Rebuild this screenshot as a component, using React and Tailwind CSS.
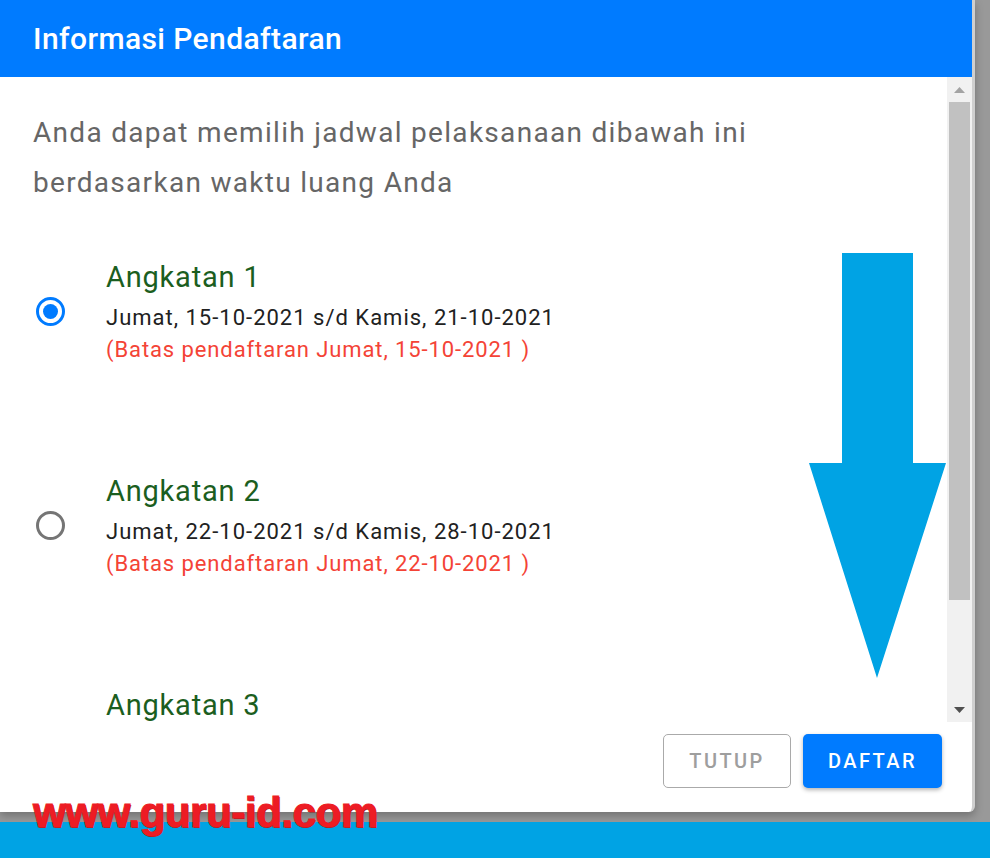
import React from "react";

function Radio({ checked }) {
  return checked ? (
    <div className="w-[29px] h-[29px] rounded-full border-[3px] border-[#007bff] flex items-center justify-center shrink-0">
      <div className="w-[15px] h-[15px] rounded-full bg-[#007bff]" />
    </div>
  ) : (
    <div className="w-[29px] h-[29px] rounded-full border-[3px] border-[#757575] shrink-0" />
  );
}

function Item({ n, range, deadline, checked }) {
  return (
    <div className="flex items-center pl-[36px] h-[109px]">
      <Radio checked={checked} />
      <div className="ml-[41px] flex flex-col">
        <div className="h-[40px] leading-[40px] text-[29px] tracking-[0.8px] text-[#1b5e20]">Angkatan {n}</div>
        <div className="mt-[5px] h-[32px] leading-[32px] text-[22px] tracking-[1px] text-[#212121]">{range}</div>
        <div className="h-[32px] leading-[32px] text-[22px] tracking-[0.9px] text-[#f44336]">{deadline}</div>
      </div>
    </div>
  );
}

export default function App() {
  return (
    <div className="relative w-[990px] h-[858px] overflow-hidden bg-[#999999] flex flex-col font-['Roboto','Liberation_Sans',sans-serif]">
      <div className="w-[975px] h-[812px] bg-white rounded-br-[6px] flex flex-col border-r-[3px] border-[#cfcfcf] shadow-[0_4px_8px_rgba(0,0,0,0.25)] shrink-0">
        <div className="h-[77px] bg-[#007bff] flex items-center px-[33px] shrink-0">
          <span className="text-white text-[30px] font-medium tracking-[0.4px]">Informasi Pendaftaran</span>
        </div>
        <div className="h-[645px] flex shrink-0">
          <div className="flex-1 overflow-hidden">
            <div className="pt-[31px] pl-[33px] pr-[40px] text-[28px] tracking-[1.3px] leading-[50px] text-[#666666] whitespace-nowrap">
              Anda dapat memilih jadwal pelaksanaan dibawah ini
              <br />
              berdasarkan waktu luang Anda
            </div>
            <div className="mt-[49px] flex flex-col gap-[105px]">
              <Item n={1} checked range="Jumat, 15-10-2021 s/d Kamis, 21-10-2021" deadline="(Batas pendaftaran Jumat, 15-10-2021 )" />
              <Item n={2} range="Jumat, 22-10-2021 s/d Kamis, 28-10-2021" deadline="(Batas pendaftaran Jumat, 22-10-2021 )" />
              <div className="flex items-start pl-[36px]">
                <div className="w-[29px] shrink-0" />
                <div className="ml-[41px] h-[40px] leading-[40px] text-[29px] tracking-[0.8px] text-[#1b5e20]">Angkatan 3</div>
              </div>
            </div>
          </div>
          <div className="w-[25px] bg-[#f1f1f1] flex flex-col shrink-0">
            <div className="h-[25px] flex items-center justify-center shrink-0">
              <svg width="11" height="6" viewBox="0 0 11 6"><polygon points="0,6 11,6 5.5,0" fill="#a3a3a3" /></svg>
            </div>
            <div className="h-[498px] mx-[2px] bg-[#c1c1c1] shrink-0" />
            <div className="flex-1" />
            <div className="h-[25px] flex items-center justify-center shrink-0">
              <svg width="11" height="6" viewBox="0 0 11 6"><polygon points="0,0 11,0 5.5,6" fill="#505050" /></svg>
            </div>
          </div>
        </div>
        <div className="flex-1 flex justify-end items-start pt-[12px] pr-[30px] gap-[12px]">
          <button className="w-[128px] h-[54px] rounded-[5px] border border-[#aaaaaa] text-[#9e9e9e] text-[20px] font-medium tracking-[0.12em] bg-white">
            TUTUP
          </button>
          <button className="w-[139px] h-[54px] rounded-[5px] bg-[#007bff] text-white text-[20px] font-medium tracking-[0.12em] shadow-[0_2px_4px_rgba(0,0,0,0.3)]">
            DAFTAR
          </button>
        </div>
      </div>
      <div className="mt-[10px] flex-1 bg-[#00a3e4]" />

      <svg className="absolute left-[809px] top-[253px]" width="137" height="425" viewBox="0 0 137 425">
        <polygon points="33,0 104,0 104,210 137,210 68,425 0,210 33,210" fill="#00a3e4" />
      </svg>

      <div className="absolute left-[33px] top-[792px] text-[42px] font-bold text-[#ed1c24] tracking-[-0.4px] leading-none font-['Liberation_Sans',Arial,sans-serif] [-webkit-text-stroke:1px_#ed1c24] [text-shadow:1px_1px_0_#9b1a1a]">
        www.guru-id.com
      </div>
    </div>
  );
}
